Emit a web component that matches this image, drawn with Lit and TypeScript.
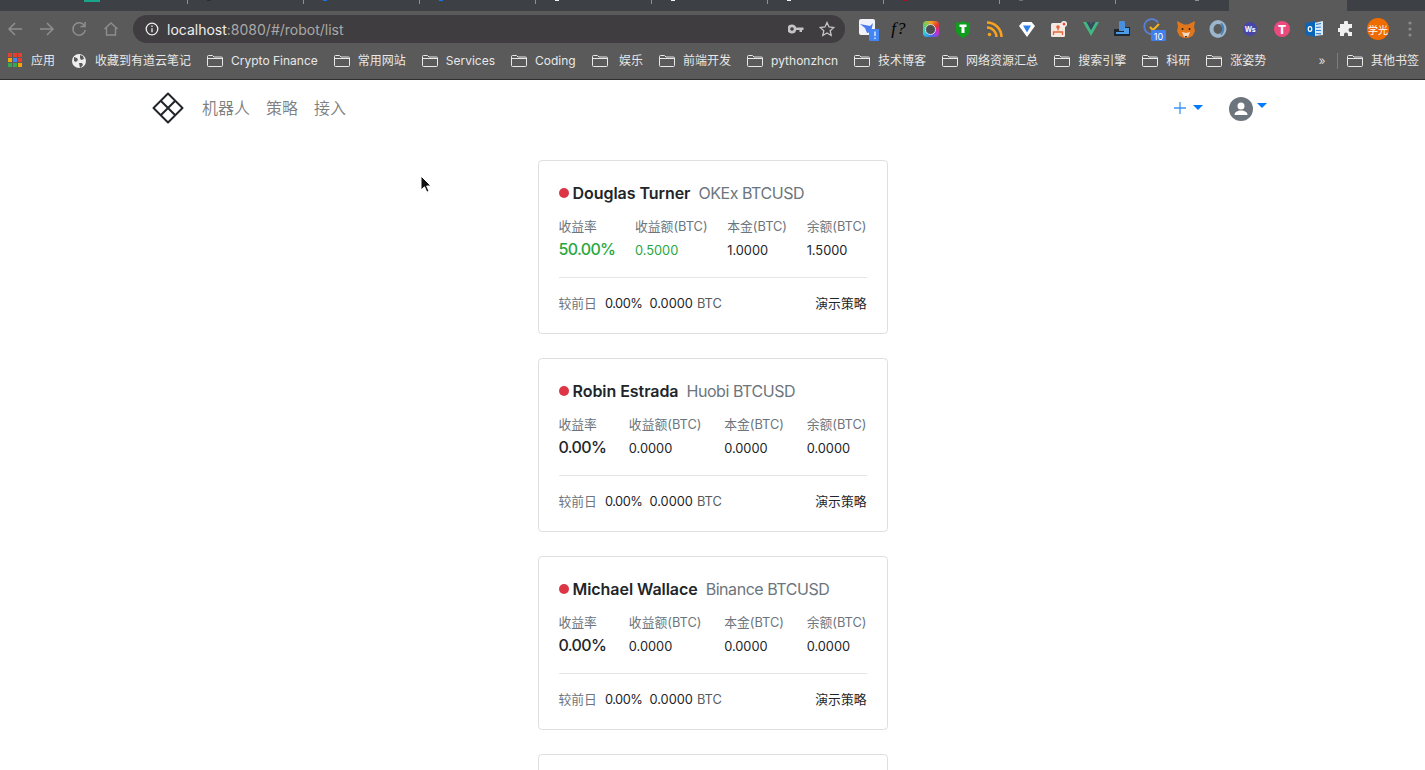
import { LitElement, html, css, svg } from 'lit'
import { customElement } from 'lit/decorators.js'
import { classMap } from 'lit/directives/class-map.js'

const bookmarks = [
	'Crypto Finance', '常用网站', 'Services', 'Coding', '\u00a0娱乐', '前端开发',
	'pythonzhcn', '技术博客', '网络资源汇总', '搜索引擎', '科研', '涨姿势',
]

const robots = [
	{ name: 'Douglas Turner', market: 'OKEx BTCUSD', rate: '50.00%', profit: '0.5000', base: '1.0000', left: '1.5000', up: true },
	{ name: 'Robin Estrada', market: 'Huobi BTCUSD', rate: '0.00%', profit: '0.0000', base: '0.0000', left: '0.0000', up: false },
	{ name: 'Michael Wallace', market: 'Binance BTCUSD', rate: '0.00%', profit: '0.0000', base: '0.0000', left: '0.0000', up: false },
]

const folder = html`<svg class="folder" width="16" height="16" viewBox="0 0 16 16" fill="none" stroke="#e8e8e8" stroke-width="1">
	<path d="M.5 3.500a1 1 0 0 1 1-1h4l1.500 1.500h7.500a1 1 0 0 1 1 1v7.500a1 1 0 0 1-1 1h-13a1 1 0 0 1-1-1z" />
	<path d="M.5 5.500h15" />
</svg>`

const appsColors = ['#e3402f', '#e3402f', '#e3402f', '#f2a60c', '#4285f4', '#e3402f', '#34a853', '#34a853', '#f2a60c']

const appsIcon = svg`<svg width="14" height="14" viewBox="0 0 14 14">
	${appsColors.map((c, i) => svg`<rect x=${(i % 3) * 5} y=${Math.floor(i / 3) * 5} width="4" height="4" fill=${c} />`)}
</svg>`

const extensions = [
	html`<svg width="24" height="24" viewBox="0 0 24 24">
		<rect x="4" y="2" width="16" height="16" rx="2" fill="#f1f3f8" />
		<path d="M5 7l10 2 3-3-2 9-4 1-2-5z" fill="#4a7cf0" />
		<rect x="14" y="12" width="12" height="12" rx="1.500" fill="#4285f4" />
		<path d="M20 14.500v4.500M20 20.500v1.500" stroke="#fff" stroke-width="1.200" />
	</svg>`,
	html`<span class="fq">f?</span>`,
	html`<span class="camera"><span class="lens"></span></span>`,
	html`<svg width="16" height="18" viewBox="0 0 16 18">
		<path d="M1 2l3 1 4-2 4 2 3-1v8c0 4-4 6.500-7 8-3-1.500-7-4-7-8z" fill="#0f9d1e" />
		<path d="M4.500 4.500h7v2.500h-2v6h-3V7h-2z" fill="#fff" />
	</svg>`,
	html`<svg width="16" height="16" viewBox="0 0 16 16" fill="none" stroke="#f7a11e" stroke-width="2.500">
		<circle cx="2.500" cy="13.500" r="1.800" fill="#f7a11e" stroke="none" />
		<path d="M0 6.500a9.500 9.500 0 0 1 9.500 9.500" />
		<path d="M0 1.500a14.500 14.500 0 0 1 14.500 14.500" />
	</svg>`,
	html`<svg width="16" height="16" viewBox="0 0 16 16">
		<path d="M3.500 1h9L16 5 8 16 0 5z" fill="#fff" />
		<path d="M4 4.500h8L8 11.500z" fill="#2f80e8" />
	</svg>`,
	html`<svg width="18" height="18" viewBox="0 0 18 18">
		<rect x="1" y="3" width="14" height="14" rx="1.500" fill="#f5e8e0" />
		<circle cx="14" cy="4" r="3" fill="#f4f4f4" /><circle cx="14" cy="4" r="1.500" fill="#e8503a" />
		<path d="M8 6.500v4M3.500 15v-3h9v3" fill="none" stroke="#e8653a" stroke-width="1.300" />
		<circle cx="8" cy="7" r="1.800" fill="#e8653a" />
	</svg>`,
	html`<svg width="16" height="14" viewBox="0 0 16 14">
		<path d="M0 0h3.500L8 8l4.500-8H16L8 14z" fill="#41b883" />
		<path d="M3.500 0h3L8 3l1.500-3h3L8 8z" fill="#35495e" />
	</svg>`,
	html`<svg width="16" height="16" viewBox="0 0 16 16">
		<rect x="5" y="0" width="6" height="10" rx="1" fill="#4a8fdc" />
		<path d="M0 8h5v2h6V6h5v9H0z" fill="#1d2530" />
		<path d="M10 7h5v6H2v-2h8z" fill="#4a9be8" />
	</svg>`,
	html`<svg width="24" height="24" viewBox="0 0 24 24" fill="none">
		<path d="M16 5.500A7.500 7.500 0 1 0 11 17" stroke="#5a7fd8" stroke-width="1.800" />
		<path d="M8 10l3 3 6-6" stroke="#f5b21e" stroke-width="2" />
		<rect x="9" y="13" width="15" height="11" rx="1" fill="#3f80ea" />
		<text x="16.500" y="22.500" text-anchor="middle" class="badge-num">10</text>
	</svg>`,
	html`<svg width="18" height="17" viewBox="0 0 18 17">
		<path d="M0 0l7 3.500h4L18 0l-1 6 1 4-2.500 5L11 17H7l-4.500-2L0 10l1-4z" fill="#e2761b" />
		<path d="M5 11l4 1 4-1-2 5H7z" fill="#f4d9c3" />
		<path d="M7.500 15h3l-1.500 1.500z" fill="#28221c" />
		<circle cx="5.500" cy="8" r="1" fill="#28221c" /><circle cx="12.500" cy="8" r="1" fill="#28221c" />
	</svg>`,
	html`<svg width="18" height="18" viewBox="0 0 18 18" fill="none">
		<ellipse cx="9" cy="9" rx="6.500" ry="7" stroke="#9ab5cc" stroke-width="4" />
		<path d="M12 3.500c3 3 3 8 0 11" stroke="#4c83b8" stroke-width="2" />
	</svg>`,
	html`<span class="round ws">Ws</span>`,
	html`<span class="round tee">T</span>`,
	html`<svg width="18" height="18" viewBox="0 0 18 18">
		<path d="M9 3l9-2v14l-9 1z" fill="#dbe8f6" />
		<path d="M11 4.500l5-1M11 7.500l5-.5M11 10.500h5M11 13.500l5 .3" stroke="#2a7fd0" stroke-width="1.200" />
		<path d="M0 3.500L10 1v16L0 14.500z" fill="#0a64b8" />
		<ellipse cx="5" cy="9" rx="1.800" ry="2.300" fill="none" stroke="#fff" stroke-width="1.200" />
	</svg>`,
	html`<svg width="16" height="16" viewBox="0 0 16 16">
		<path d="M6 1.500a2 2 0 0 1 4 0V3h4v4h-1.500a2 2 0 0 0 0 4H14v4H10v-1.500a2 2 0 0 0-4 0V15H2v-4H.5a2 2 0 0 1 0-4H2V3h4z" fill="#f1f1f1" />
	</svg>`,
	html`<span class="round me">学光</span>`,
	html`<svg width="4" height="16" viewBox="0 0 4 16" fill="#8b8b8b"><circle cx="2" cy="2" r="1.600" /><circle cx="2" cy="8" r="1.600" /><circle cx="2" cy="14" r="1.600" /></svg>`,
]

@customElement('app-root')
export class AppRoot extends LitElement {
	static styles = css`
		:host {
			display: block;
			height: 770px;
			overflow: hidden;
			position: relative;
			background: #fff;
			font-family: Inter, 'Noto Sans CJK SC', sans-serif;
			color: #212529;
		}
		.tabs {
			height: 11px;
			background: #3d4145;
			display: flex;
			padding-left: 71px;
			overflow: hidden;
		}
		.tab {
			width: 116px;
			flex: none;
			height: 4px;
			box-sizing: border-box;
			border-left: 1px solid #8e9194;
			padding-left: 12px;
			display: flex;
		}
		.tab:first-child {
			border-left-color: transparent;
		}
		.mark {
			width: 16px;
			height: 2px;
			background: var(--c);
		}
		.mark.small {
			width: 4px;
			height: 1px;
			margin-left: 7px;
		}
		.spacer {
			flex: none;
			width: 118px;
			height: 11px;
			background: #5a5a5a;
			margin-left: -1px;
		}
		.tab.last {
			width: 115px;
			height: 11px;
			border-left: none;
			position: relative;
			border-bottom-right-radius: 6px;
			padding-left: 73px;
		}
		.tab.last::before {
			content: '';
			position: absolute;
			left: 0;
			top: 0;
			height: 4px;
			border-left: 1px solid #8e9194;
		}
		.tail {
			flex: 1;
			border-bottom-left-radius: 6px;
		}
		.toolbar {
			height: 36px;
			box-sizing: border-box;
			background: #5a5a5a;
			display: flex;
			align-items: flex-start;
			padding-top: 4px;
		}
		.nav-btns {
			width: 133px;
			height: 28px;
			flex: none;
			display: flex;
			align-items: center;
			box-sizing: border-box;
		}
		.nav-btn {
			width: 32px;
			display: flex;
			justify-content: center;
			flex: none;
		}
		.nav-btn:first-child {
			margin-left: -1px;
		}
		.omnibox {
			width: 712px;
			height: 28px;
			flex: none;
			border-radius: 14px;
			background: #3f3d3f;
			display: flex;
			align-items: center;
			box-sizing: border-box;
			padding: 0 10px 0 12px;
			font-size: 14px;
			color: #a9a9a9;
		}
		.url {
			margin-left: 8px;
			flex: 1;
		}
		.url b {
			font-weight: 400;
			color: #eeeeee;
		}
		.omni-icon {
			display: flex;
			margin-left: 15px;
		}
		.exts {
			display: flex;
			margin-left: 6px;
			height: 28px;
		}
		.ext {
			width: 31.950px;
			flex: none;
			display: flex;
			align-items: center;
			justify-content: center;
		}
		.fq {
			font: italic 17px 'Liberation Serif', serif;
			color: #000;
			letter-spacing: 1px;
		}
		.camera {
			width: 16px;
			height: 16px;
			border-radius: 4px;
			background: conic-gradient(#f5a623, #e6352b, #c42bd8, #3a6ff0, #2fd0e0, #5fd35f, #f5a623);
			display: flex;
			align-items: center;
			justify-content: center;
		}
		.lens {
			width: 9px;
			height: 9px;
			border-radius: 50%;
			background: #4c4f52;
			border: 1.500px solid #d8dade;
		}
		.round {
			border-radius: 50%;
			display: flex;
			align-items: center;
			justify-content: center;
			color: #fff;
			flex: none;
		}
		.ws {
			width: 14px;
			height: 14px;
			background: #4a45a8;
			font-size: 7px;
			font-weight: 700;
		}
		.tee {
			width: 16px;
			height: 16px;
			background: #ec4a7c;
			font-size: 12px;
			font-weight: 800;
		}
		.me {
			width: 22px;
			height: 22px;
			background: #ee6c00;
			font-size: 10px;
		}
		.badge-num {
			font: 400 9px Inter, sans-serif;
			fill: #fff;
		}
		.bookmarks {
			height: 33px;
			box-sizing: border-box;
			background: #5a5a5a;
			border-bottom: 1px solid #2e2e2e;
			display: flex;
			align-items: flex-start;
			padding: 6px 0 0 8px;
			font-size: 12px;
			line-height: 16px;
			color: #e8e8e8;
		}
		.bm {
			display: flex;
			gap: 8px;
			flex: none;
			margin-right: 16px;
		}
		.bm.first {
			gap: 9px;
			margin-right: 16px;
		}
		.bm svg {
			flex: none;
		}
		.more {
			margin-left: auto;
			width: 14px;
			text-align: center;
			color: #d8d8d8;
		}
		.sep {
			width: 1px;
			height: 16px;
			background: #7d7d7d;
			margin: 0 9px 0 8px;
		}
		.bm.other {
			margin-right: 6px;
		}
		.navbar {
			height: 57px;
			box-sizing: border-box;
			display: flex;
			align-items: center;
			padding: 0 158px 2px 152px;
		}
		.logo {
			display: flex;
			margin-right: 18px;
		}
		.navbar a {
			font-size: 16px;
			color: rgba(0, 0, 0, 0.5);
			margin-right: 16px;
			margin-bottom: 2px;
		}
		.nav-right {
			margin-left: auto;
			display: flex;
			align-items: center;
		}
		.caret {
			width: 0;
			height: 0;
			border-left: 5px solid transparent;
			border-right: 5px solid transparent;
			border-top: 5px solid #007bff;
		}
		.plus {
			display: flex;
			margin-right: 7px;
		}
		.plus-group {
			display: flex;
			align-items: center;
			margin-right: 26px;
		}
		.user {
			display: flex;
			margin-top: 2px;
		}
		.user .caret {
			margin: 6px 0 0 4px;
		}
		main {
			display: flex;
			flex-direction: column;
			align-items: center;
			gap: 24px;
			padding-top: 23px;
		}
		.card {
			width: 350px;
			box-sizing: border-box;
			flex: none;
			border: 1px solid rgba(0, 0, 0, 0.125);
			border-radius: 4px;
			padding: 20px 20px 19px;
		}
		.card.stub {
			height: 174px;
		}
		.title {
			display: flex;
			align-items: center;
			font-size: 16px;
			line-height: 24px;
		}
		.dot {
			width: 10px;
			height: 10px;
			border-radius: 50%;
			background: #dc3545;
			margin-right: 4px;
		}
		.name {
			font-weight: 600;
			margin-right: 8px;
			letter-spacing: -0.05px;
		}
		.market {
			color: #6c757d;
			letter-spacing: -0.45px;
		}
		.stats {
			display: flex;
			justify-content: space-between;
			margin-top: 12px;
			font-size: 12.800px;
			line-height: 20px;
		}
		.label {
			color: #6c757d;
			margin-bottom: 4px;
		}
		.big {
			font-size: 16px;
			font-weight: 500;
			letter-spacing: -0.65px;
			margin-top: -2px;
		}
		.up {
			color: #28a745;
		}
		hr {
			border: 0;
			border-top: 1px solid rgba(0, 0, 0, 0.1);
			margin: 16px 0;
		}
		.foot {
			display: flex;
			font-size: 12.800px;
			line-height: 20px;
		}
		.foot .muted {
			color: #6c757d;
			margin-right: 8px;
		}
		.foot .pct {
			margin-right: 7px;
			letter-spacing: -0.45px;
		}
		.foot .amount {
			margin-right: 4px;
		}
		.foot .unit {
			color: #555b61;
		}
		.foot .strat {
			margin-left: auto;
		}
		.cursor {
			position: absolute;
			left: 420px;
			top: 175px;
		}
	`

	renderStat(label: string, value: string, up: boolean, big = false) {
		return html`<div>
			<div class="label">${label}</div>
			<div class=${classMap({ up, big })}>${value}</div>
		</div>`
	}

	renderCard(r: (typeof robots)[number]) {
		return html`<div class="card">
			<div class="title">
				<span class="dot"></span>
				<span class="name">${r.name}</span>
				<span class="market">${r.market}</span>
			</div>
			<div class="stats">
				${this.renderStat('收益率', r.rate, r.up, true)}
				${this.renderStat('收益额(BTC)', r.profit, r.up)}
				${this.renderStat('本金(BTC)', r.base, false)}
				${this.renderStat('余额(BTC)', r.left, false)}
			</div>
			<hr />
			<div class="foot">
				<span class="muted">较前日</span>
				<span class="pct">0.00%</span>
				<span class="amount">0.0000</span>
				<span class="unit">BTC</span>
				<span class="strat">演示策略</span>
			</div>
		</div>`
	}

	renderChrome() {
		const marks = ['#17a689', '#2b2f33', '#1a73e8', '#1a73e8', '#f2f2f2', '#f2f2f2', '#f2f2f2', '#b0101c', '#6d7174']
		return html`
			<div class="tabs">
				${marks.map((c, i) => html`<div class="tab"><span class=${classMap({ mark: true, small: i > 0 })} style="--c: ${c}"></span></div>`)}
				<div class="tab last"><span class="mark small" style="--c: #8e9194"></span></div>
				<div class="spacer"></div>
				<div class="tail"></div>
			</div>
			<div class="toolbar">
				<div class="nav-btns">
					<div class="nav-btn"><svg width="16" height="16" viewBox="0 0 16 16" fill="none" stroke="#8e8e8e" stroke-width="1.500"><path d="M15 8H2M8 2L2 8l6 6" /></svg></div>
					<div class="nav-btn"><svg width="16" height="16" viewBox="0 0 16 16" fill="none" stroke="#8e8e8e" stroke-width="1.500"><path d="M1 8h13M8 2l6 6-6 6" /></svg></div>
					<div class="nav-btn"><svg width="16" height="16" viewBox="0 0 16 16" fill="none" stroke="#8e8e8e" stroke-width="1.500"><path d="M13.500 5A6.200 6.200 0 1 0 14.200 9" /><path d="M14 1v4.500H9.500" /></svg></div>
					<div class="nav-btn"><svg width="16" height="16" viewBox="0 0 16 16" fill="none" stroke="#8e8e8e" stroke-width="1.400"><path d="M1.500 8L8 2l6.500 6M3.500 7v7h9V7" /></svg></div>
				</div>
				<div class="omnibox">
					<svg width="14" height="14" viewBox="0 0 14 14" fill="none" stroke="#eee" stroke-width="1.300"><circle cx="7" cy="7" r="5.800" /><path d="M7 6.200v4M7 3.600v1.400" /></svg>
					<span class="url"><b>localhost</b>:8080/#/robot/list</span>
					<span class="omni-icon"><svg width="16" height="16" viewBox="0 0 16 16" fill="#c4c4c4"><path d="M4 3.500a4.500 4.500 0 0 1 4.200 3h7.300v2.500h-1.500v2h-2.500V9H8.200A4.500 4.500 0 1 1 4 3.500zm0 2.700a1.800 1.800 0 1 0 0 3.600 1.800 1.800 0 0 0 0-3.600z" /></svg></span>
					<span class="omni-icon"><svg width="16" height="16" viewBox="0 0 16 16" fill="none" stroke="#c4c4c4" stroke-width="1.300"><path d="M8 1.500l2 4.500 4.800.5-3.600 3.200 1 4.800L8 12l-4.200 2.500 1-4.800L1.200 6.500 6 6z" /></svg></span>
				</div>
				<div class="exts">${extensions.map(e => html`<div class="ext">${e}</div>`)}</div>
			</div>
			<div class="bookmarks">
				<div class="bm first">${appsIcon}<span>应用</span></div>
				<div class="bm"><svg width="16" height="16" viewBox="0 0 16 16"><circle cx="8" cy="8" r="7" fill="#eee" /><path d="M3 4l3 1 1 2-2 2-2-1zM9 2l3 1 1 3-3 1-1-2zM8 10l3 0 1 2-3 3z" fill="#5a5a5a" /></svg><span>收藏到有道云笔记</span></div>
				${bookmarks.map(b => html`<div class="bm">${folder}<span>${b}</span></div>`)}
				<span class="more">»</span>
				<span class="sep"></span>
				<div class="bm other">${folder}<span>其他书签</span></div>
			</div>
		`
	}

	render() {
		return html`
			${this.renderChrome()}
			<nav class="navbar">
				<span class="logo">
					<svg width="32" height="32" viewBox="0 0 32 32" fill="none" stroke="#212529" stroke-width="2" stroke-linejoin="round">
						<path d="M16 1.500L30.500 16 16 30.500 1.500 16z" />
						<path d="M8.750 8.750l14.500 14.500M23.250 8.750L8.750 23.250" />
					</svg>
				</span>
				<a>机器人</a>
				<a>策略</a>
				<a>接入</a>
				<div class="nav-right">
					<div class="plus-group">
						<span class="plus"><svg width="12" height="12" viewBox="0 0 12 12" stroke="#3d94f6" stroke-width="1.300"><path d="M6 0v12M0 6h12" /></svg></span>
						<span class="caret"></span>
					</div>
					<div class="user">
						<svg width="24" height="24" viewBox="0 0 24 24">
							<circle cx="12" cy="12" r="12" fill="#6c757d" />
							<circle cx="12" cy="9" r="3.500" fill="#fff" />
							<path d="M5.500 18c0-3 3-4.500 6.500-4.500s6.500 1.500 6.500 4.500z" fill="#fff" />
						</svg>
						<span class="caret"></span>
					</div>
				</div>
			</nav>
			<main>
				${robots.map(r => this.renderCard(r))}
				<div class="card stub"></div>
			</main>
			<svg class="cursor" width="12" height="19" viewBox="0 0 12 19">
				<path d="M1 1v14l3.500-3.200 2.300 5.400 2.200-1-2.300-5.200H11z" fill="#111" stroke="#fff" stroke-width="1" />
			</svg>
		`
	}
}
